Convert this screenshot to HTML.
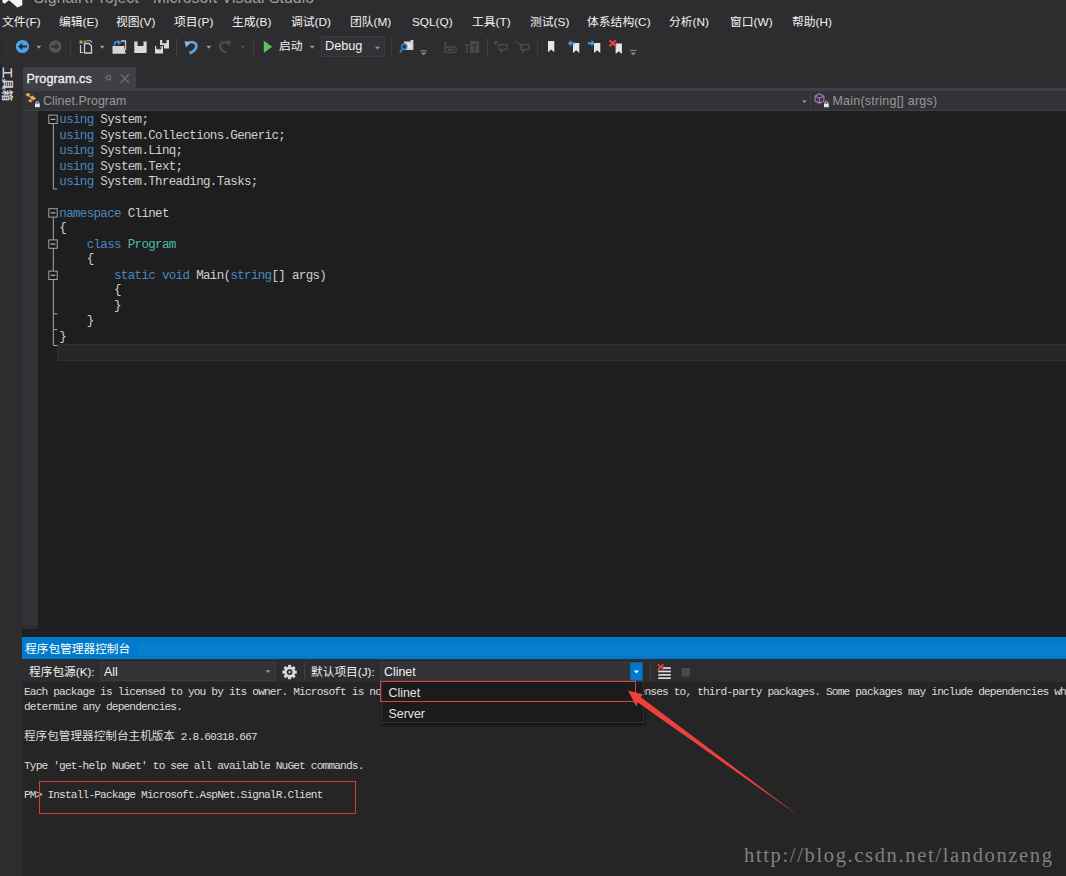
<!DOCTYPE html>
<html lang="zh-CN">
<head>
<meta charset="utf-8">
<title>SignalRProject - Microsoft Visual Studio</title>
<style>
*{box-sizing:border-box;margin:0;padding:0}
html,body{width:1066px;height:876px;overflow:hidden;background:#2d2d30}
body{position:relative;font-family:"Liberation Sans","Noto Sans CJK SC",sans-serif;color:#f1f1f1;font-size:12px}
.abs{position:absolute}
#title{left:33.5px;top:-10.8px;font-size:15.9px;color:#9d9d9d;white-space:nowrap;line-height:18px}
#menu{left:0;top:13px;height:18px;white-space:nowrap;font-size:11.8px;line-height:18px;color:#f1f1f1}
#menu span{position:absolute;top:0;white-space:nowrap}
#side{left:0;top:62px;width:22px;height:814px;background:#2d2d30}
#sidetxt{left:13.2px;top:67.3px;font-size:11.4px;line-height:12px;color:#d0d0d0;white-space:nowrap;transform-origin:0 0;transform:rotate(90deg);font-weight:bold}
#tab{left:22.5px;top:66.5px;width:113.6px;height:21.5px;background:#3f3f46}
#tab .t{position:absolute;left:4px;top:4.5px;font-size:12.6px;line-height:17px;color:#f1f1f1;-webkit-text-stroke:0.3px #f1f1f1;letter-spacing:0.1px}
#tabline{left:23px;top:87.5px;width:1043px;height:3px;background:#3f3f46}
#nav{left:23px;top:90.5px;width:1043px;height:20px;background:#333337;border-bottom:1px solid #3f3f46}
#nav .t{position:absolute;top:2px;font-size:12.4px;line-height:17px;color:#999;white-space:nowrap}
#gutter{left:23px;top:110.5px;width:15.3px;height:514px;background:#323236}
#code{left:38.3px;top:110.5px;width:1028px;height:518.5px;background:#1e1e1e}
#curline{left:57.3px;top:344.3px;width:1009px;height:16.4px;background:#272727;border:1.5px solid #2f2f2f;border-right:none}
.cl{position:absolute;left:59.3px;height:16px;line-height:16px;font-family:"Liberation Mono",monospace;font-size:12.5px;letter-spacing:-0.66px;white-space:pre;color:#d0d0d0}
.k{color:#4a86c0}.ty{color:#48bda5}
#pmtitle{left:22px;top:637px;width:1044px;height:22.7px;background:#007acc}
#pmtitle .t{position:absolute;left:3px;top:3px;font-size:11.7px;line-height:17px;color:#fff}
#pmbar{left:22px;top:659px;width:1044px;height:23px;background:#2d2d30}
#console{left:22px;top:682px;width:1044px;height:194px;background:#252526}
.co{position:absolute;left:24px;height:15px;line-height:15px;font-family:"Liberation Mono","Noto Sans CJK SC",monospace;font-size:11.2px;letter-spacing:-0.86px;white-space:pre;color:#dcdcdc;width:1042px;overflow:hidden}
.co .cj{letter-spacing:0.02px;font-size:11.6px}
.lbl{position:absolute;font-size:11.7px;line-height:17px;color:#f1f1f1;white-space:nowrap}
.combo{position:absolute;background:#333337;border:1px solid #3b3b3f}
#wm{left:744px;top:843.5px;font-family:"Liberation Serif","Noto Serif CJK SC",serif;font-size:20.5px;letter-spacing:1.65px;color:#808080;white-space:nowrap;line-height:22px}
</style>
</head>
<body>
<!-- title bar remnants -->
<svg class="abs" style="left:0;top:0" width="30" height="8" viewBox="0 0 30 8"><path d="M2.4 0 L2.6 2.6 L4.6 3.7 L8.6 0.4 L9.4 0.4 L17.3 7.6 L22.3 5.2 L22.3 0Z" fill="#f4f4f4"/></svg>
<div id="title" class="abs">SignalRProject - Microsoft Visual Studio</div>

<!-- menu -->
<div id="menu" class="abs">
<span style="left:2px">文件(F)</span>
<span style="left:59px">编辑(E)</span>
<span style="left:116px">视图(V)</span>
<span style="left:174px">项目(P)</span>
<span style="left:232px">生成(B)</span>
<span style="left:291px">调试(D)</span>
<span style="left:350px">团队(M)</span>
<span style="left:412px">SQL(Q)</span>
<span style="left:472px">工具(T)</span>
<span style="left:530px">测试(S)</span>
<span style="left:587px">体系结构(C)</span>
<span style="left:669px">分析(N)</span>
<span style="left:730px">窗口(W)</span>
<span style="left:792px">帮助(H)</span>
</div>

<!-- toolbar -->
<svg id="tb" class="abs" style="left:0;top:34px" width="700" height="26" viewBox="0 34 700 26">
<!-- gripper -->
<g fill="#46464a"><rect x="4" y="38" width="1" height="1"/><rect x="6" y="40" width="1" height="1"/><rect x="4" y="42" width="1" height="1"/><rect x="6" y="44" width="1" height="1"/><rect x="4" y="46" width="1" height="1"/><rect x="6" y="48" width="1" height="1"/><rect x="4" y="50" width="1" height="1"/><rect x="6" y="52" width="1" height="1"/><rect x="4" y="54" width="1" height="1"/></g>
<!-- back -->
<circle cx="22.4" cy="46.5" r="6.6" fill="#4aa3e6"/>
<path d="M18.2 46.5 L22.3 42.8 L22.3 45.4 L27 45.4 L27 47.6 L22.3 47.6 L22.3 50.2Z" fill="#1e2a38"/>
<path d="M36.3 45.8 L41.4 45.8 L38.85 48.8Z" fill="#999"/>
<!-- forward -->
<circle cx="55.3" cy="46.5" r="6.3" fill="#555558"/>
<path d="M59.5 46.5 L55.4 42.8 L55.4 45.4 L50.8 45.4 L50.8 47.6 L55.4 47.6 L55.4 50.2Z" fill="#333336"/>
<rect x="70" y="38" width="1" height="18" fill="#3e3e42"/>
<!-- new project -->
<g>
<rect x="79.5" y="40.5" width="3" height="3" fill="#c8a24a"/><rect x="83.5" y="40.5" width="3" height="2" fill="#9a8a5a"/>
<path d="M84.5 43.5 L89 43.5 L91.5 46 L91.5 53 L84.5 53Z" fill="none" stroke="#cfcfcf" stroke-width="1.3"/>
<path d="M80.5 45 L80.5 52.5 L83 52.5" fill="none" stroke="#cfcfcf" stroke-width="1.2"/>
<path d="M86.5 40.8 L90.5 40.8 L92 42.5" fill="none" stroke="#bdbdbd" stroke-width="1.1"/>
</g>
<path d="M99.7 45.8 L104.7 45.8 L102.2 48.8Z" fill="#999"/>
<!-- open -->
<g>
<path d="M112.5 46 L124 46 L125.8 53.8 L112.5 53.8Z" fill="#d6d6d6"/>
<path d="M121 41 L125.5 41 L125.5 50" fill="none" stroke="#c0c0c0" stroke-width="1.4"/>
<path d="M114.5 45.5 C114 42.2 117 40.6 119.6 42.2" fill="none" stroke="#3f97dc" stroke-width="1.8"/>
<path d="M117.7 40 L121.6 42.6 L118 45Z" fill="#3f97dc"/>
</g>
<!-- save -->
<path d="M134.3 41.6 L146.6 41.6 L146.6 53 L134.3 53Z M137.5 41.6 L137.5 46 L143.5 46 L143.5 41.6Z" fill="#dadada" fill-rule="evenodd"/>
<!-- save all -->
<g fill="#dadada" fill-rule="evenodd">
<path d="M160 40 L169 40 L169 48.5 L160 48.5Z M162.3 40 L162.3 43.3 L166.6 43.3 L166.6 40Z"/>
<path d="M154.5 45.5 L163.5 45.5 L163.5 54 L154.5 54Z M156.8 45.5 L156.8 48.8 L161 48.8 L161 45.5Z" stroke="#2d2d30" stroke-width="1"/>
</g>
<rect x="176" y="38" width="1" height="18" fill="#3e3e42"/>
<!-- undo -->
<path d="M187 43.5 C192 40.5 197 42.5 196.3 46.8 C195.8 50 192.5 52 189.5 53.2" fill="none" stroke="#5aa8e8" stroke-width="2.6" stroke-linecap="butt"/>
<path d="M184.6 40.9 L191 42.2 L186 47.6Z" fill="#7fbcf0"/>
<path d="M206.3 45.8 L211.4 45.8 L208.85 48.8Z" fill="#999"/>
<!-- redo -->
<path d="M228.5 43.5 C224 40.8 219.5 42.6 220.2 46.6 C220.6 49.5 223.5 51.5 226 52.5" fill="none" stroke="#4c4c50" stroke-width="2.4"/>
<path d="M230.8 40.6 L225 41 L230 47Z" fill="#4c4c50"/>
<path d="M240.6 45.8 L245 45.8 L242.8 48.8Z" fill="#55555a"/>
<rect x="253" y="38" width="1" height="18" fill="#3e3e42"/>
<!-- play -->
<path d="M263.8 40.8 L272.2 46.85 L263.8 52.9Z" fill="#5cc35c"/>
<path d="M309.6 45.8 L314.8 45.8 L312.2 48.8Z" fill="#999"/>
<!-- debug combo -->
<rect x="321.5" y="36.5" width="63" height="20" fill="#333337" stroke="#3d3d41"/>
<path d="M375 46.7 L380 46.7 L377.5 49.4Z" fill="#999"/>
<rect x="391" y="38" width="1" height="18" fill="#3e3e42"/>
<!-- find in files -->
<g>
<path d="M404 41.5 L410.5 41.5 L410.5 40 L413.4 40 L413.4 50 L404 50Z" fill="#d0d0d0"/>
<rect x="406" y="43.5" width="5.5" height="4.5" fill="#e8e8e8"/>
<circle cx="404.2" cy="46.6" r="2.6" fill="#1f3550" stroke="#3a7fc0" stroke-width="1.5"/>
<path d="M402.4 48.8 L400 52.6" stroke="#3a7fc0" stroke-width="1.8"/>
</g>
<g fill="#858585"><rect x="420.6" y="50.2" width="6" height="1.2"/><path d="M420.6 52.6 L426.6 52.6 L423.6 55.6Z"/></g>
<!-- gray disabled icons -->
<g fill="none" stroke="#4a4a4e" stroke-width="1.3">
<path d="M445 42.5 L445 52.3 L456 52.3 M445 47 L456 47 L456 52.3"/>
<rect x="447.5" y="48.7" width="6" height="2" fill="#4a4a4e" stroke="none"/>
<rect x="444.3" y="42.4" width="2.4" height="2.4" fill="#4a4a4e" stroke="none"/>
</g>
<g fill="#4a4a4e">
<path d="M470 41 L479 41 L479 53 L470 53Z"/>
<rect x="464.6" y="44" width="4.5" height="1.5"/><rect x="466" y="45.5" width="1.5" height="7.5"/>
</g>
<g fill="#2d2d30"><rect x="471.5" y="44.5" width="6" height="1.2"/><rect x="474" y="44.5" width="1.2" height="8.5"/></g>
<rect x="487" y="38" width="1" height="18" fill="#3e3e42"/>
<g fill="none" stroke="#4a4a4e" stroke-width="1.4">
<path d="M499 44.5 L507 44.5 L507 49.5 L503 49.5 L501 52.3 L501 49.5 L499 49.5Z"/>
<path d="M493.5 42.5 L498 42.5 M495.8 40.8 L495.8 45.5"/>
<path d="M521 44.5 L529 44.5 L529 49.5 L525 49.5 L523 52.3 L523 49.5 L521 49.5Z"/>
<path d="M515.5 41 L523 47"/>
</g>
<rect x="537" y="38" width="1" height="18" fill="#3e3e42"/>
<!-- bookmarks -->
<path d="M548 41.1 L554.3 41.1 L554.3 52.2 L551.15 49.4 L548 52.2Z" fill="#e6e6e6"/>
<path d="M573 43 L579.3 43 L579.3 53 L576.15 50.3 L573 53Z" fill="#e6e6e6"/>
<path d="M567.8 43.3 L571.2 40 L571.2 42.2 L574.6 42.2 L574.6 44.4 L571.2 44.4 L571.2 46.6Z" fill="#3f97dc"/>
<path d="M594 43 L600.3 43 L600.3 53 L597.15 50.3 L594 53Z" fill="#e6e6e6"/>
<path d="M594.9 43.3 L591.5 40 L591.5 42.2 L588 42.2 L588 44.4 L591.5 44.4 L591.5 46.6Z" fill="#3f97dc"/>
<path d="M615.6 43.5 L621.9 43.5 L621.9 54 L618.75 51.2 L615.6 54Z" fill="#e6e6e6"/>
<path d="M609.5 40.3 L616 46.3 M616 40.3 L609.5 46.3" stroke="#e2483e" stroke-width="1.9"/>
<g fill="#858585"><rect x="630.3" y="49.8" width="6" height="1.2"/><path d="M630.3 52.4 L636.3 52.4 L633.3 55.4Z"/></g>
</svg>
<span class="lbl" style="left:279px;top:38px;font-size:11.8px">启动</span>
<span class="lbl" style="left:325px;top:38px;font-size:12.7px">Debug</span>

<!-- sidebar -->
<div id="side" class="abs"></div>
<div class="abs" style="left:0;top:64px;width:1.6px;height:39px;background:#232734"></div>
<div id="sidetxt" class="abs">工具箱</div>

<!-- document tab -->
<div id="tab" class="abs"><span class="t">Program.cs</span>
<svg class="abs" style="left:80px;top:5px" width="30" height="14" viewBox="103 72 30 14"><g fill="none" stroke="#6e6e72" stroke-width="1.1"><path d="M120.8 74.3 L128.8 82.7 M128.8 74.3 L120.8 82.7" stroke-width="1.3"/><rect x="107" y="75.5" width="3.4" height="4.2"/><path d="M104.6 77.7 H107 M110.4 75 V80.4"/></g></svg>
</div>
<div id="tabline" class="abs"></div>
<div id="nav" class="abs">
<svg class="abs" style="left:1px;top:0" width="20" height="19" viewBox="24 90 20 19">
<g fill="#e3b04b"><path d="M25.2 93.5 l3-1.8 l2.5 2.2 l-3 1.8z"/><path d="M29.5 96.2 l3-1.8 l3.6 3.2 l-3 1.8z"/><path d="M28 99.5 l2.2-1.3 l2.4 2.1 l-2.2 1.3z"/></g>
<path d="M28.5 94.5 L31 97 M31.5 98.5 L30.2 99.6" stroke="#e3b04b" stroke-width="1" fill="none"/>
<rect x="35" y="102.6" width="4.8" height="3.6" fill="#e8e8e8"/><path d="M36 102.8 v-1 a1.4 1.3 0 0 1 2.8 0 v1" fill="none" stroke="#e8e8e8" stroke-width="0.9"/>
</svg>
<span class="t" style="left:20px;letter-spacing:0.05px">Clinet.Program</span>
<svg class="abs" style="left:777px;top:0" width="32" height="19" viewBox="800 90 32 19">
<path d="M802 99.4 h4.8 l-2.4 2.7z" fill="#999"/>
<rect x="810" y="91" width="1" height="17" fill="#3f3f46"/>
<path d="M819.5 92.8 l4.4 2.3 v4.8 l-4.4 2.3 l-4.4-2.3 v-4.8z M819.5 97.3 v4.6 M815.3 95.2 l4.2 2.1 l4.2-2.1" fill="none" stroke="#a074c4" stroke-width="1.2"/>
<rect x="824" y="102.6" width="4.8" height="3.6" fill="#e8e8e8"/><path d="M825 102.8 v-1 a1.4 1.3 0 0 1 2.8 0 v1" fill="none" stroke="#e8e8e8" stroke-width="0.9"/>
</svg>
<span class="t" style="left:809.5px;letter-spacing:0.26px">Main(string[] args)</span>
</div>

<!-- editor -->
<div id="gutter" class="abs"></div>
<div id="code" class="abs"></div>
<div id="curline" class="abs"></div>
<svg class="abs" style="left:0;top:0" width="70" height="400" viewBox="0 0 70 400"><path d="M53.3 123.3 V189.0 h4" fill="none" stroke="#a5a5a5" stroke-width="1"/><path d="M53.3 216.9 V345.5 h4 M53.3 313.8 h4 M53.3 329.6 h4" fill="none" stroke="#a5a5a5" stroke-width="1"/><rect x="48.8" y="115.1" width="8.4" height="8.4" fill="#1e1e1e" stroke="#a5a5a5" stroke-width="1"/><path d="M50.7 119.3 h4.6" stroke="#c8c8c8" stroke-width="1.1"/><rect x="48.8" y="208.7" width="8.4" height="8.4" fill="#1e1e1e" stroke="#a5a5a5" stroke-width="1"/><path d="M50.7 212.9 h4.6" stroke="#c8c8c8" stroke-width="1.1"/><rect x="48.8" y="239.9" width="8.4" height="8.4" fill="#1e1e1e" stroke="#a5a5a5" stroke-width="1"/><path d="M50.7 244.1 h4.6" stroke="#c8c8c8" stroke-width="1.1"/><rect x="48.8" y="271.1" width="8.4" height="8.4" fill="#1e1e1e" stroke="#a5a5a5" stroke-width="1"/><path d="M50.7 275.3 h4.6" stroke="#c8c8c8" stroke-width="1.1"/></svg>
<div class="cl" style="top:111.9px"><span class="k">using</span> System;</div>
<div class="cl" style="top:127.5px"><span class="k">using</span> System.Collections.Generic;</div>
<div class="cl" style="top:143.1px"><span class="k">using</span> System.Linq;</div>
<div class="cl" style="top:158.7px"><span class="k">using</span> System.Text;</div>
<div class="cl" style="top:174.3px"><span class="k">using</span> System.Threading.Tasks;</div>
<div class="cl" style="top:205.5px"><span class="k">namespace</span> Clinet</div>
<div class="cl" style="top:219.7px">{</div>
<div class="cl" style="top:236.7px">    <span class="k">class</span> <span class="ty">Program</span></div>
<div class="cl" style="top:250.9px">    {</div>
<div class="cl" style="top:267.9px">        <span class="k">static</span> <span class="k">void</span> Main(<span class="k">string</span>[] args)</div>
<div class="cl" style="top:282.1px">        {</div>
<div class="cl" style="top:297.7px">        }</div>
<div class="cl" style="top:313.3px">    }</div>
<div class="cl" style="top:328.9px">}</div>

<!-- package manager console -->
<div class="abs" style="left:22px;top:629px;width:1044px;height:8px;background:#1f1f21"></div>
<div id="pmtitle" class="abs"><span class="t">程序包管理器控制台</span><div class="abs" style="left:116px;top:5.5px;width:928px;height:12.5px;background:rgba(255,255,255,0.035)"></div></div>
<div id="pmbar" class="abs"></div>
<div id="console" class="abs"></div>
<span class="lbl" style="left:29px;top:663px">程序包源(K):</span>
<div class="combo" style="left:100px;top:662px;width:176px;height:19px"></div>
<span class="lbl" style="left:104px;top:664px;font-size:12.4px">All</span>
<svg class="abs" style="left:260px;top:660px" width="60" height="22" viewBox="260 660 60 22">
<path d="M265.6 670.3 h4.8 l-2.4 2.7z" fill="#999"/>
<g transform="translate(289.6 672.1)"><g fill="#dadada"><circle r="5.6"/><rect x="-1.5" y="-7.2" width="3" height="14.4"/><rect x="-1.5" y="-7.2" width="3" height="14.4" transform="rotate(45)"/><rect x="-1.5" y="-7.2" width="3" height="14.4" transform="rotate(90)"/><rect x="-1.5" y="-7.2" width="3" height="14.4" transform="rotate(135)"/></g><circle r="2.9" fill="#2d2d30"/><circle r="1.2" fill="#d6d6d6"/></g>
<rect x="304" y="662" width="1" height="19" fill="#3f3f46"/>
</svg>
<span class="lbl" style="left:311px;top:663px">默认项目(J):</span>
<div class="combo" style="left:380px;top:662px;width:263px;height:19px"></div>
<span class="lbl" style="left:384px;top:664px;font-size:12.4px">Clinet</span>
<div class="co" style="top:685.4px">Each package is licensed to you by its owner. Microsoft is not responsible for, nor does it grant any licenses to, third-party packages. Some packages may include dependencies which are governed by additional licenses. Follow the package source (feed) URL to</div>
<div class="co" style="top:700.0px">determine any dependencies.</div>
<div class="co" style="top:729.3px"><span class="cj">程序包管理器控制台主机版本</span> 2.8.60318.667</div>
<div class="co" style="top:758.6px">Type 'get-help NuGet' to see all available NuGet commands.</div>
<div class="co" style="top:787.9px">PM&gt; Install-Package Microsoft.AspNet.SignalR.Client</div>

<!-- dropdown button + icons -->
<svg class="abs" style="left:626px;top:660px" width="70" height="22" viewBox="626 660 70 22">
<rect x="630.3" y="662.5" width="12.2" height="18" fill="#007acc"/>
<path d="M633.9 670.6 h5 l-2.5 2.8z" fill="#fff"/>
<rect x="650" y="662" width="1" height="19" fill="#3f3f46"/>
<g fill="#dcdcdc"><rect x="663" y="667.2" width="7.8" height="1.7"/><rect x="658.2" y="670.6" width="12.6" height="1.7"/><rect x="658.2" y="674" width="12.6" height="1.7"/><rect x="658.2" y="677.3" width="12.6" height="1.7"/></g>
<path d="M657.8 664.3 L663.6 669.6 M663.6 664.3 L657.8 669.6" stroke="#e2483e" stroke-width="1.6"/>
<rect x="681.8" y="668" width="8.2" height="8.4" fill="#4b4b4e"/>
</svg>
<!-- dropdown list -->
<div class="abs" style="left:381px;top:681px;width:262.5px;height:41.5px;background:#1b1b1c;border:1px solid #333337;box-shadow:1px 2px 3px rgba(0,0,0,.5)"></div>
<span class="lbl" style="left:388.5px;top:685px;font-size:12.4px;color:#e4e4e4">Clinet</span>
<span class="lbl" style="left:388.5px;top:705.5px;font-size:12.4px;color:#e4e4e4">Server</span>
<div class="abs" style="left:380.3px;top:680.7px;width:256px;height:21.5px;border:1.2px solid #e5413c"></div>
<div class="abs" style="left:38.5px;top:781.2px;width:317.3px;height:32.5px;border:1.2px solid #d93a3a"></div>
<!-- arrow -->
<svg class="abs" style="left:620px;top:684px" width="190" height="140" viewBox="620 684 190 140">
<path d="M627.9 690.6 L642.5 694.2 L640.9 697.2 L798.5 815.8 L637.6 702.2 L636.5 706.8Z" fill="#f0403c"/>
</svg>
<div id="wm" class="abs">http://blog.csdn.net/landonzeng</div>
</body>
</html>
